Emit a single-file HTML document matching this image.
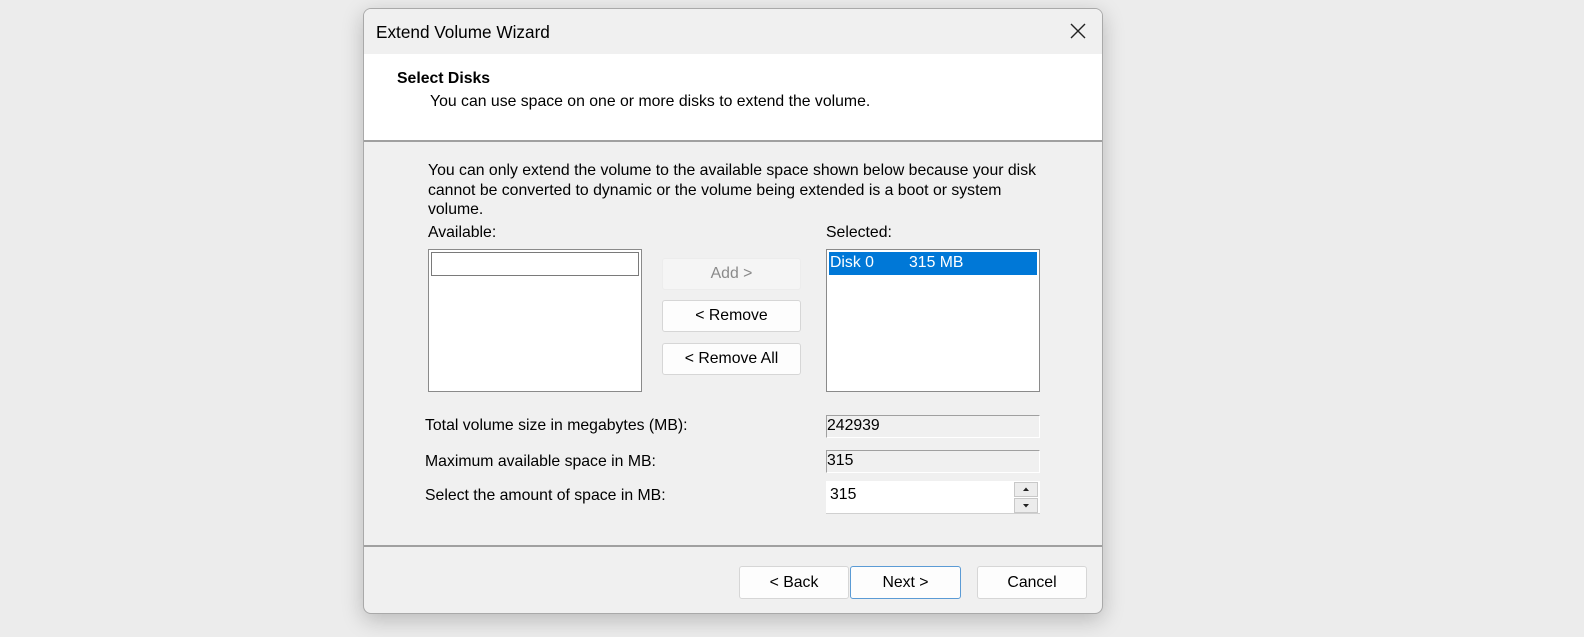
<!DOCTYPE html>
<html><head><style>
body{margin:0;width:1584px;height:637px;background:#ececec;font-family:"Liberation Sans",sans-serif;position:relative;overflow:hidden;color:#000}
.a{position:absolute}
.win{left:363px;top:8px;width:738px;height:604px;background:#f0f0f0;border:1px solid #a9a9a9;border-radius:8px;box-shadow:0 6px 22px rgba(0,0,0,.22);overflow:hidden}
.t{font-size:15.8px}
.btn{background:#fdfdfd;border:1px solid #d6d6d6;border-radius:3px;text-align:center;font-size:15.8px;box-sizing:border-box}
.ro{background:#f0f0f0;border:1px solid #c8c8c8;border-top-color:#a0a0a0;border-left-color:#a0a0a0;border-bottom-color:#fff;border-right-color:#fff;box-sizing:border-box;font-size:15.8px;padding:1px 0 0 0}
</style></head><body>
<div class="a win">
 <div class="a" style="left:0;top:0;width:738px;height:45px;background:#f0f0f0"></div>
 <div class="a" style="left:12px;top:13px;font-size:17.2px">Extend Volume Wizard</div>
 <svg class="a" style="left:706px;top:14px" width="16" height="16"><path d="M1 1L15 15M15 1L1 15" stroke="#222" stroke-width="1.4"/></svg>
 <div class="a" style="left:0;top:45px;width:738px;height:86px;background:#fff;border-bottom:2px solid #a0a0a0"></div>
 <div class="a" style="left:33px;top:61px;font-size:15.8px;font-weight:bold">Select Disks</div>
 <div class="a t" style="left:66px;top:84px">You can use space on one or more disks to extend the volume.</div>
 <div class="a t" style="left:64px;top:152px;width:614px;line-height:19.5px">You can only extend the volume to the available space shown below because your disk cannot be converted to dynamic or the volume being extended is a boot or system volume.</div>
 <div class="a t" style="left:64px;top:215px">Available:</div>
 <div class="a t" style="left:462px;top:215px">Selected:</div>
 <div class="a" style="left:64px;top:240px;width:214px;height:143px;background:#fff;border:1px solid #8a8a8a;box-sizing:border-box"><div style="margin:2px;height:22px;border:1px solid #7a7a7a"></div></div>
 <div class="a btn" style="left:298px;top:249px;width:139px;height:32px;line-height:30px;color:#8a8a8a;background:#f5f5f5;border-color:#ececec">Add &gt;</div>
 <div class="a btn" style="left:298px;top:291px;width:139px;height:32px;line-height:30px">&lt; Remove</div>
 <div class="a btn" style="left:298px;top:334px;width:139px;height:32px;line-height:30px">&lt; Remove All</div>
 <div class="a" style="left:462px;top:240px;width:214px;height:143px;background:#fff;border:1px solid #8a8a8a;box-sizing:border-box"><div style="margin:2px;height:23px;background:#0078d7;color:#fff;font-size:15.8px;line-height:22px;padding-left:1px">Disk 0&nbsp;&nbsp;&nbsp;&nbsp;&nbsp;&nbsp;&nbsp;&nbsp;315 MB</div></div>
 <div class="a t" style="left:61px;top:408px">Total volume size in megabytes (MB):</div>
 <div class="a t" style="left:61px;top:444px">Maximum available space in MB:</div>
 <div class="a t" style="left:61px;top:478px">Select the amount of space in MB:</div>
 <div class="a ro" style="left:462px;top:406px;width:214px;height:23px">242939</div>
 <div class="a ro" style="left:462px;top:441px;width:214px;height:23px">315</div>
 <div class="a" style="left:462px;top:472px;width:214px;height:33px;background:#fff;border-bottom:1px solid #d0d0d0;box-sizing:border-box;font-size:15.8px;padding:5px 0 0 4px">315</div>
 <div class="a" style="left:650px;top:473px;width:24px;height:15px;background:#ececec;border:1px solid #c8c8c8;box-sizing:border-box"><svg width="22" height="13"><path d="M8 8L11 4.5L14 8Z" fill="#222"/></svg></div>
 <div class="a" style="left:650px;top:489px;width:24px;height:15px;background:#ececec;border:1px solid #c8c8c8;box-sizing:border-box"><svg width="22" height="13"><path d="M8 5L11 8.5L14 5Z" fill="#222"/></svg></div>
 <div class="a" style="left:0;top:536px;width:738px;height:2px;background:#a0a0a0"></div>
 <div class="a btn" style="left:375px;top:557px;width:110px;height:33px;line-height:31px">&lt; Back</div>
 <div class="a btn" style="left:486px;top:557px;width:111px;height:33px;line-height:31px;border-color:#5b9bd5">Next &gt;</div>
 <div class="a btn" style="left:613px;top:557px;width:110px;height:33px;line-height:31px">Cancel</div>
</div>
</body></html>
